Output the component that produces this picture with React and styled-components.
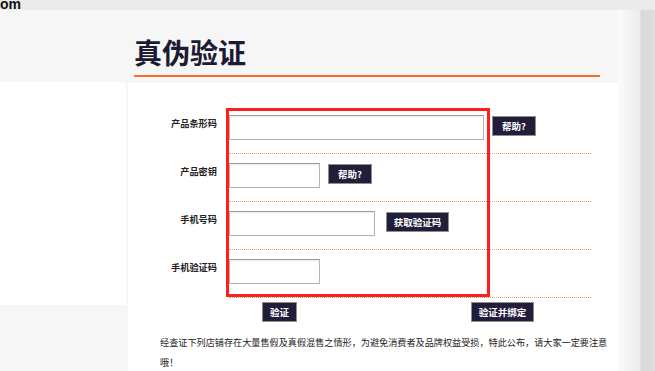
import styled, { createGlobalStyle } from 'styled-components';

const GlobalStyle = createGlobalStyle`
	html, body {
		margin: 0;
		padding: 0;
	}
	body {
		width: 655px;
		height: 371px;
		overflow: hidden;
		background: #f6f6f6;
		font-family: 'Noto Sans CJK SC', 'Noto Sans', sans-serif;
	}
`;

const fields = [
	{ label: '产品条形码', width: 255, action: '帮助?', btn: 44, gap: 8 },
	{ label: '产品密钥', width: 91, action: '帮助?', btn: 44, gap: 8 },
	{ label: '手机号码', width: 146, action: '获取验证码', btn: 63, gap: 11 },
	{ label: '手机验证码', width: 91 },
];

function App() {
	return (
		<>
			<GlobalStyle />
			<TopStrip>
				<SiteName>om</SiteName>
			</TopStrip>
			<Main>
				<SideColumn>
					<SidePanel />
				</SideColumn>
				<Center>
					<Header>
						<Title>真伪验证</Title>
					</Header>
					<Panel>
						<Highlight />
						{fields.map((f) => (
							<Row key={f.label}>
								<Label>{f.label}</Label>
								<Input $w={f.width} />
								{f.action && (
									<DarkButton $gap={f.gap} $w={f.btn}>
										{f.action}
									</DarkButton>
								)}
							</Row>
						))}
						<Actions>
							<DarkButton $w={35}>验证</DarkButton>
							<DarkButton $w={63}>验证并绑定</DarkButton>
						</Actions>
						<Notice>
							经查证下列店铺存在大量售假及真假混售之情形，为避免消费者及品牌权益受损，特此公布，请大家一定要注意哦！
						</Notice>
					</Panel>
				</Center>
				<Shade />
			</Main>
		</>
	);
}

export default App;

// ########## styled components ##########
const TopStrip = styled.div`
	height: 10px;
	background: #ebebeb;
	overflow: hidden;
`;

const SiteName = styled.div`
	font-family: 'Liberation Sans', sans-serif;
	font-weight: bold;
	font-size: 14px;
	line-height: 10px;
	margin-top: -1px;
	color: #111;
`;

const Main = styled.div`
	display: flex;
	height: 361px;
`;

const SideColumn = styled.div`
	width: 126px;
	margin-right: 2px;
	padding-top: 72px;
`;

const SidePanel = styled.div`
	height: 223px;
	background: #fff;
`;

const Center = styled.div`
	width: 490px;
	display: flex;
	flex-direction: column;
`;

const Header = styled.div`
	margin-left: 6px;
	width: 466px;
	padding: 25px 0 6px;
	border-bottom: 2px solid #fb6a2c;
	margin-bottom: 6px;
`;

const Title = styled.h1`
	margin: 0;
	font-size: 28px;
	line-height: 34px;
	font-weight: bold;
	color: #1c1b33;
`;

const Panel = styled.div`
	position: relative;
	flex: 1;
	background: #fff;
	padding: 23px 0 0;
`;

const Highlight = styled.div`
	position: absolute;
	left: 98px;
	top: 25px;
	width: 258px;
	height: 183px;
	border: 3px solid #ff1e1e;
	pointer-events: none;
`;

const Row = styled.div`
	display: flex;
	align-items: flex-start;
	height: 48px;
	padding-top: 9px;
	box-sizing: border-box;
	margin-left: 101px;
	width: 362px;
	border-bottom: 1px dotted #dca06c;
`;

const Label = styled.div`
	position: absolute;
	left: 0;
	width: 89px;
	text-align: right;
	margin-top: 2px;
	font-size: 9.2px;
	font-weight: bold;
	line-height: 12px;
	color: #222;
`;

const Input = styled.div`
	width: ${(p) => p.$w}px;
	height: 25px;
	box-sizing: border-box;
	border: 1px solid #b4b4b4;
	border-top-color: #9a9a9a;
	box-shadow: inset 0 1px 1px rgba(0, 0, 0, 0.08);
	background: #fff;
	flex: none;
`;

const DarkButton = styled.div`
	margin-left: ${(p) => p.$gap || 0}px;
	margin-top: 1px;
	width: ${(p) => p.$w}px;
	height: 20px;
	box-sizing: border-box;
	display: flex;
	align-items: center;
	justify-content: center;
	background: #221d3b;
	border: 1px solid #8e8e8e;
	color: #fff;
	font-size: 9.5px;
	font-weight: bold;
	white-space: nowrap;
`;

const Actions = styled.div`
	display: flex;
	gap: 174px;
	margin-left: 134px;
	margin-top: 3px;
`;

const Notice = styled.p`
	margin: 10px 0 0 32px;
	width: 460px;
	font-size: 9.15px;
	line-height: 20px;
	color: #222;
`;

const Shade = styled.div`
	flex: 1;
	background: linear-gradient(
		90deg,
		#fbfbfb 0,
		#ebebeb 22px,
		#d8d8d8 23px,
		#dedede 100%
	);
`;
